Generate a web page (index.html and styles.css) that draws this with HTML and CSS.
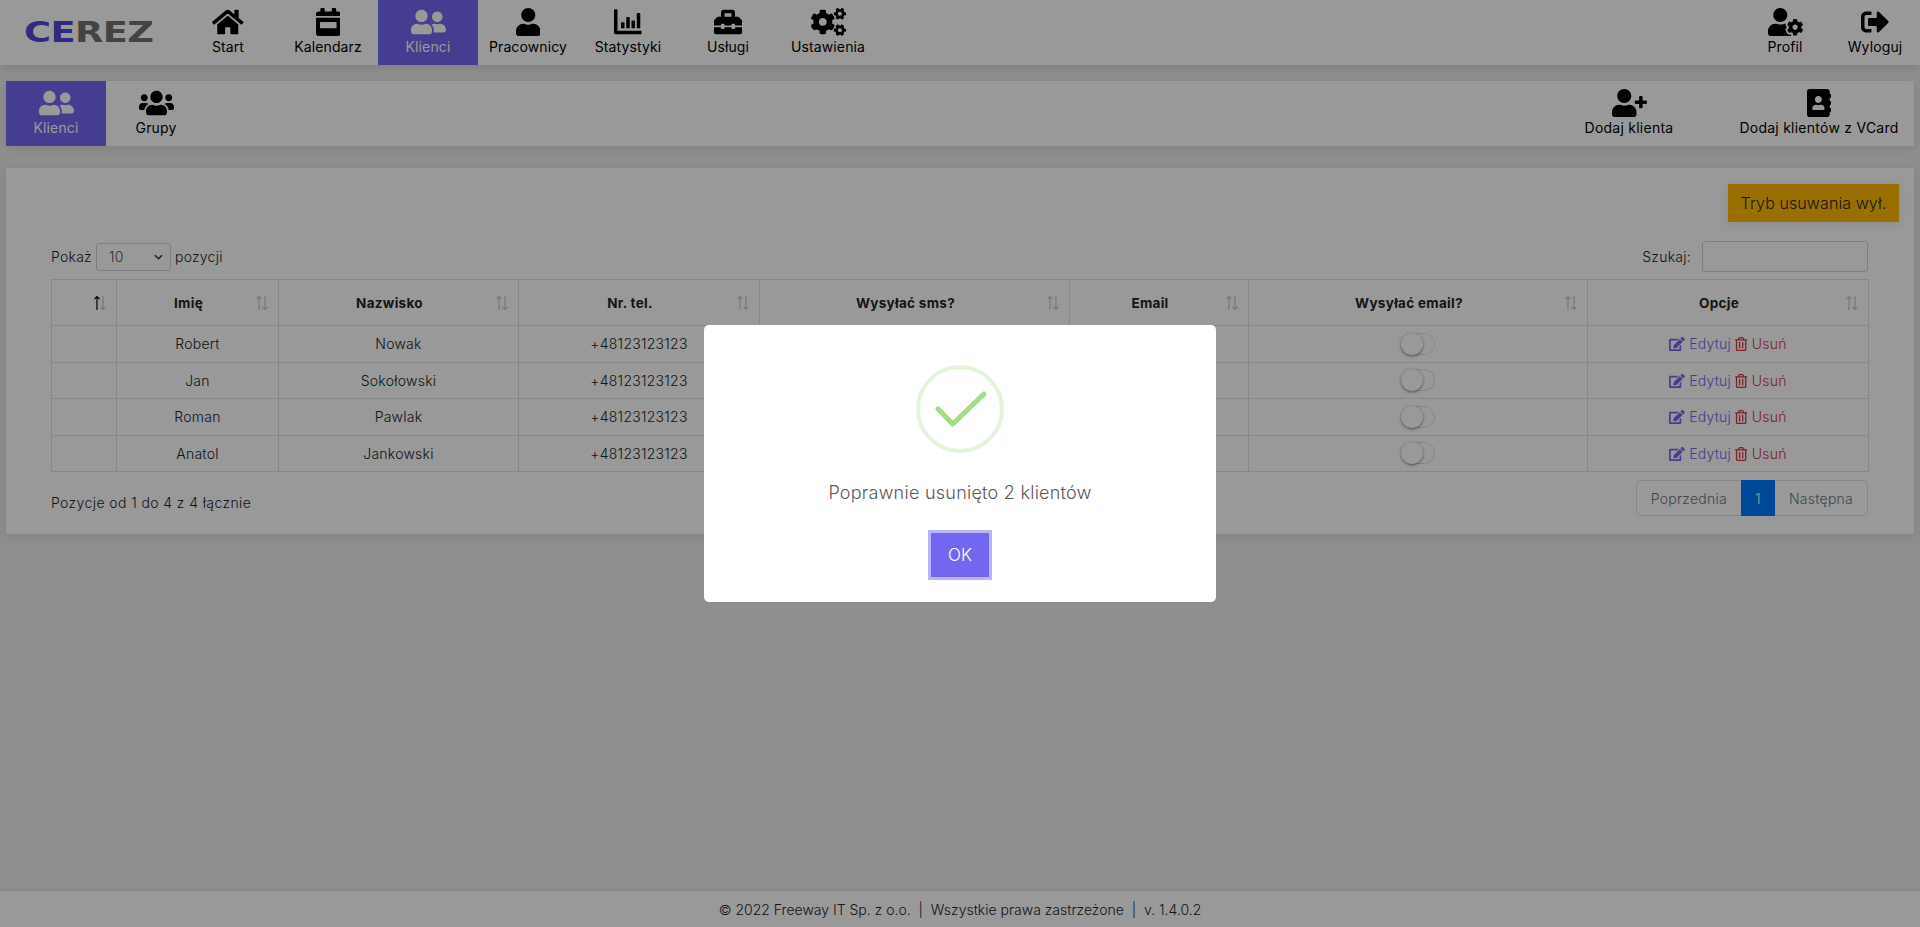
FILE: index.html
```html
<!DOCTYPE html>
<html lang="pl">
<head>
<meta charset="utf-8">
<title>Cerez - Klienci</title>
<link rel="stylesheet" href="styles.css">
</head>
<body>
<svg class="defs" aria-hidden="true">
<defs>
<path id="i-home" d="M280.37 148.26L96 300.11V464a16 16 0 0 0 16 16l112.06-.29a16 16 0 0 0 15.92-16V368a16 16 0 0 1 16-16h64a16 16 0 0 1 16 16v95.64a16 16 0 0 0 16 16.05L464 480a16 16 0 0 0 16-16V300L295.67 148.26a12.19 12.19 0 0 0-15.3 0zM571.6 251.47L488 182.56V44.05a12 12 0 0 0-12-12h-56a12 12 0 0 0-12 12v72.61L318.47 43a48 48 0 0 0-61 0L4.34 251.47a12 12 0 0 0-1.6 16.9l25.5 31A12 12 0 0 0 45.15 301l235.22-193.74a12.19 12.19 0 0 1 15.3 0L530.9 301a12 12 0 0 0 16.9-1.6l25.5-31a12 12 0 0 0-1.7-16.93z"/>
<path id="i-cal" fill-rule="evenodd" d="M96 0h48c9 0 16 7 16 16v48h128V16c0-9 7-16 16-16h48c9 0 16 7 16 16v48h40c27 0 48 21 48 48v32H0v-32c0-27 21-48 48-48h32V16c0-9 7-16 16-16zM0 176h448v288c0 27-21 48-48 48H48c-27 0-48-21-48-48zM84 256c-7 0-12 5-12 12v88c0 7 5 12 12 12h280c7 0 12-5 12-12v-88c0-7-5-12-12-12z"/>
<path id="i-friends" d="M192 256c61.9 0 112-50.1 112-112S253.9 32 192 32 80 82.1 80 144s50.1 112 112 112zm76.8 32h-8.3c-20.8 10-43.9 16-68.5 16s-47.6-6-68.5-16h-8.3C51.6 288 0 339.6 0 403.2V432c0 26.5 21.5 48 48 48h288c26.5 0 48-21.5 48-48v-28.8c0-63.6-51.6-115.2-115.2-115.2zM480 256c53 0 96-43 96-96s-43-96-96-96-96 43-96 96 43 96 96 96zm48 32h-3.8c-13.9 4.8-28.6 8-44.2 8s-30.3-3.2-44.2-8H432c-20.4 0-39.2 5.9-55.7 15.4 24.4 26.3 39.7 61.2 39.7 99.8v38.4c0 2.2-.5 4.3-.6 6.4H592c26.5 0 48-21.5 48-48 0-61.9-50.1-112-112-112z"/>
<path id="i-user" d="M224 256c70.7 0 128-57.3 128-128S294.7 0 224 0 96 57.3 96 128s57.3 128 128 128zm89.6 32h-16.7c-22.2 10.2-46.9 16-72.9 16s-50.6-5.8-72.9-16h-16.7C60.2 288 0 348.2 0 422.4V464c0 26.5 21.5 48 48 48h352c26.5 0 48-21.5 48-48v-41.6c0-74.2-60.2-134.4-134.4-134.4z"/>
<path id="i-chart" d="M0 40c0-9 7-16 16-16h32c9 0 16 7 16 16v376h424c9 0 16 7 16 16v32c0 9-7 16-16 16H32c-18 0-32-14-32-32zM128 272c0-6 5-12 12-12h40c7 0 12 6 12 12v88c0 7-5 12-12 12h-40c-7 0-12-5-12-12zm96-96c0-7 5-12 12-12h40c7 0 12 5 12 12v184c0 7-5 12-12 12h-40c-7 0-12-5-12-12zm96 64c0-7 5-12 12-12h40c7 0 12 5 12 12v120c0 7-5 12-12 12h-40c-7 0-12-5-12-12zm96-136c0-7 5-12 12-12h40c7 0 12 5 12 12v256c0 7-5 12-12 12h-40c-7 0-12-5-12-12z"/>
<path id="i-toolbox" d="M502.63 214.63l-45.25-45.25c-6-6-14.14-9.37-22.63-9.37H384V80c0-26.51-21.49-48-48-48H176c-26.51 0-48 21.49-48 48v80H77.25c-8.49 0-16.63 3.37-22.63 9.37L9.37 214.63c-6 6-9.37 14.14-9.37 22.63V320h128v-16c0-8.84 7.16-16 16-16h32c8.84 0 16 7.16 16 16v16h128v-16c0-8.84 7.16-16 16-16h32c8.84 0 16 7.16 16 16v16h128v-82.75c0-8.48-3.37-16.62-9.37-22.62zM320 160H192V96h128v64zm64 208c0 8.84-7.16 16-16 16h-32c-8.84 0-16-7.16-16-16v-16H192v16c0 8.84-7.16 16-16 16h-32c-8.84 0-16-7.16-16-16v-16H0v96c0 17.67 14.33 32 32 32h448c17.67 0 32-14.33 32-32v-96H384v16z"/>
<path id="i-cogs" d="M512.1 191l-8.2 14.3c-3 5.3-9.4 7.5-15.1 5.4-11.8-4.4-22.6-10.7-32.1-18.6-4.6-3.8-5.8-10.5-2.8-15.7l8.2-14.3c-6.9-8-12.3-17.3-15.9-27.4h-16.5c-6 0-11.2-4.3-12.2-10.3-2-12-2.1-24.6 0-37.1 1-6 6.2-10.4 12.2-10.4h16.5c3.6-10.1 9-19.4 15.9-27.4l-8.2-14.3c-3-5.2-1.9-11.9 2.8-15.7 9.5-7.9 20.4-14.2 32.1-18.6 5.7-2.1 12.1.1 15.1 5.4l8.2 14.3c10.5-1.9 21.2-1.9 31.7 0L552 6.3c3-5.3 9.4-7.5 15.1-5.4 11.8 4.4 22.6 10.7 32.1 18.6 4.6 3.8 5.8 10.5 2.8 15.7l-8.2 14.3c6.9 8 12.3 17.3 15.9 27.4h16.5c6 0 11.2 4.3 12.2 10.3 2 12 2.1 24.6 0 37.1-1 6-6.2 10.4-12.2 10.4h-16.5c-3.6 10.1-9 19.4-15.9 27.4l8.2 14.3c3 5.2 1.9 11.9-2.8 15.7-9.5 7.9-20.4 14.2-32.1 18.6-5.7 2.1-12.1-.1-15.1-5.4l-8.2-14.3c-10.4 1.9-21.2 1.9-31.7 0zm-10.5-58.8c38.5 29.6 82.4-14.3 52.8-52.8-38.5-29.7-82.4 14.3-52.8 52.8zM386.3 286.1l33.7 16.8c10.1 5.8 14.5 18.1 10.5 29.1-8.9 24.2-26.4 46.4-42.6 65.8-7.4 8.9-20.2 11.1-30.3 5.3l-29.1-16.8c-16 13.7-34.6 24.6-54.9 31.7v33.6c0 11.6-8.3 21.6-19.7 23.6-24.6 4.2-50.4 4.4-75.9 0-11.5-2-20-11.9-20-23.6V418c-20.3-7.2-38.9-18-54.9-31.7L74 403c-10 5.8-22.9 3.6-30.3-5.3-16.2-19.4-33.3-41.6-42.2-65.7-4-10.9.4-23.2 10.5-29.1l33.3-16.8c-3.9-20.9-3.9-42.4 0-63.4L12 205.8c-10.1-5.8-14.6-18.1-10.5-29 8.9-24.2 26-46.4 42.2-65.8 7.4-8.9 20.2-11.1 30.3-5.3l29.1 16.8c16-13.7 34.6-24.6 54.9-31.7V57.1c0-11.5 8.2-21.5 19.6-23.5 24.6-4.2 50.5-4.4 76-.1 11.5 2 20 11.9 20 23.6v33.6c20.3 7.2 38.9 18 54.9 31.7l29.1-16.8c10-5.8 22.9-3.6 30.3 5.3 16.2 19.4 33.2 41.6 42.1 65.8 4 10.9.1 23.2-10 29.1l-33.7 16.8c3.9 21 3.9 42.5 0 63.5zm-117.6 21.1c59.2-77-28.7-164.9-105.7-105.7-59.2 77 28.7 164.9 105.7 105.7zm243.4 182.7l-8.2 14.3c-3 5.3-9.4 7.5-15.1 5.4-11.8-4.4-22.6-10.7-32.1-18.6-4.6-3.8-5.8-10.5-2.8-15.7l8.2-14.3c-6.9-8-12.3-17.3-15.9-27.4h-16.5c-6 0-11.2-4.3-12.2-10.3-2-12-2.1-24.6 0-37.1 1-6 6.2-10.4 12.2-10.4h16.5c3.6-10.1 9-19.4 15.9-27.4l-8.2-14.3c-3-5.2-1.9-11.9 2.8-15.7 9.5-7.9 20.4-14.2 32.1-18.6 5.7-2.1 12.1.1 15.1 5.4l8.2 14.3c10.5-1.9 21.2-1.9 31.7 0l8.2-14.3c3-5.3 9.4-7.5 15.1-5.4 11.8 4.4 22.6 10.7 32.1 18.6 4.6 3.8 5.8 10.5 2.8 15.7l-8.2 14.3c6.9 8 12.3 17.3 15.9 27.4h16.5c6 0 11.2 4.3 12.2 10.3 2 12 2.1 24.6 0 37.1-1 6-6.2 10.4-12.2 10.4h-16.5c-3.6 10.1-9 19.4-15.9 27.4l8.2 14.3c3 5.2 1.9 11.9-2.8 15.7-9.5 7.9-20.4 14.2-32.1 18.6-5.7 2.1-12.1-.1-15.1-5.4l-8.2-14.3c-10.4 1.9-21.2 1.9-31.7 0zM501.6 431c38.5 29.6 82.4-14.3 52.8-52.8-38.5-29.6-82.4 14.3-52.8 52.8z"/>
<path id="i-usercog" d="M610.5 373.3c2.6-14.1 2.6-28.5 0-42.6l25.8-14.9c3-1.7 4.3-5.2 3.3-8.5-6.7-21.6-18.2-41.2-33.2-57.4-2.3-2.5-6-3.1-9-1.4l-25.8 14.9c-10.9-9.3-23.4-16.5-36.9-21.3v-29.8c0-3.4-2.4-6.4-5.7-7.1-22.3-5-45-4.8-66.2 0-3.3.7-5.7 3.7-5.7 7.1v29.8c-13.5 4.8-26 12-36.9 21.3l-25.8-14.9c-2.9-1.7-6.7-1.1-9 1.4-15 16.2-26.5 35.8-33.2 57.4-1 3.3.4 6.8 3.3 8.5l25.8 14.9c-2.6 14.1-2.6 28.5 0 42.6l-25.8 14.9c-3 1.7-4.3 5.2-3.3 8.5 6.7 21.6 18.2 41.1 33.2 57.4 2.3 2.5 6 3.1 9 1.4l25.8-14.9c10.9 9.3 23.4 16.5 36.9 21.3v29.8c0 3.4 2.4 6.4 5.7 7.1 22.3 5 45 4.8 66.2 0 3.3-.7 5.7-3.7 5.7-7.1v-29.8c13.5-4.8 26-12 36.9-21.3l25.8 14.9c2.9 1.7 6.7 1.1 9-1.4 15-16.2 26.5-35.8 33.2-57.4 1-3.3-.4-6.8-3.3-8.5l-25.8-14.9zM496 400.5c-26.8 0-48.5-21.8-48.5-48.5s21.8-48.5 48.5-48.5 48.5 21.8 48.5 48.5-21.7 48.5-48.5 48.5zM224 256c70.7 0 128-57.3 128-128S294.7 0 224 0 96 57.3 96 128s57.3 128 128 128zm201.2 226.5c-2.3-1.2-4.6-2.6-6.8-3.9l-7.9 4.6c-6 3.4-12.8 5.3-19.6 5.3-10.9 0-21.4-4.6-28.9-12.6-18.3-19.8-32.3-43.9-40.2-69.6-5.5-17.7 1.9-36.4 17.9-45.7l7.9-4.6c-.1-2.6-.1-5.2 0-7.8l-7.9-4.6c-16-9.2-23.4-28-17.9-45.7.9-2.9 2.2-5.8 3.2-8.7-3.8-.3-7.5-1.2-11.4-1.2h-16.7c-22.2 10.2-46.9 16-72.9 16s-50.6-5.8-72.9-16h-16.7C60.2 288 0 348.2 0 422.4V464c0 26.5 21.5 48 48 48h352c10.1 0 19.5-3.2 27.2-8.5-1.2-3.8-2-7.7-2-11.8v-9.2z"/>
<path id="i-signout" d="M497 273L329 441c-15 15-41 4.5-41-17v-96H152c-13.3 0-24-10.7-24-24v-96c0-13.3 10.7-24 24-24h136V88c0-21.4 25.9-32 41-17l168 168c9.3 9.4 9.3 24.6 0 34zM192 436v-40c0-6.6-5.4-12-12-12H96c-17.7 0-32-14.3-32-32V160c0-17.7 14.3-32 32-32h84c6.6 0 12-5.4 12-12V76c0-6.6-5.4-12-12-12H96c-53 0-96 43-96 96v192c0 53 43 96 96 96h84c6.6 0 12-5.4 12-12z"/>
<path id="i-users" d="M96 224c35.3 0 64-28.7 64-64s-28.7-64-64-64-64 28.7-64 64 28.7 64 64 64zm448 0c35.3 0 64-28.7 64-64s-28.7-64-64-64-64 28.7-64 64 28.7 64 64 64zm32 32h-64c-17.6 0-33.5 7.1-45.1 18.6 40.3 22.1 68.9 62 75.1 109.4h66c17.7 0 32-14.3 32-32v-32c0-35.3-28.7-64-64-64zm-256 0c61.9 0 112-50.1 112-112S381.9 32 320 32 208 82.1 208 144s50.1 112 112 112zm76.8 32h-8.3c-20.8 10-43.9 16-68.5 16s-47.6-6-68.5-16h-8.3C179.6 288 128 339.6 128 403.2V432c0 26.5 21.5 48 48 48h288c26.5 0 48-21.5 48-48v-28.8c0-63.6-51.6-115.2-115.2-115.2zm-223.7-13.4C161.5 263.1 145.6 256 128 256H64c-35.3 0-64 28.7-64 64v32c0 17.7 14.3 32 32 32h65.9c6.3-47.4 34.9-87.3 75.2-109.4z"/>
<path id="i-userplus" d="M624 208h-64v-64c0-8.8-7.2-16-16-16h-32c-8.8 0-16 7.2-16 16v64h-64c-8.8 0-16 7.2-16 16v32c0 8.8 7.2 16 16 16h64v64c0 8.8 7.2 16 16 16h32c8.8 0 16-7.2 16-16v-64h64c8.8 0 16-7.2 16-16v-32c0-8.8-7.2-16-16-16zm-400 48c70.7 0 128-57.3 128-128S294.7 0 224 0 96 57.3 96 128s57.3 128 128 128zm89.6 32h-16.7c-22.2 10.2-46.9 16-72.9 16s-50.6-5.8-72.9-16h-16.7C60.2 288 0 348.2 0 422.4V464c0 26.5 21.5 48 48 48h352c26.5 0 48-21.5 48-48v-41.6c0-74.2-60.2-134.4-134.4-134.4z"/>
<path id="i-book" d="M436 160c6.6 0 12-5.4 12-12v-40c0-6.6-5.4-12-12-12h-20V48c0-26.5-21.5-48-48-48H48C21.5 0 0 21.5 0 48v416c0 26.5 21.5 48 48 48h320c26.5 0 48-21.5 48-48v-48h20c6.6 0 12-5.4 12-12v-40c0-6.6-5.4-12-12-12h-20v-64h20c6.6 0 12-5.4 12-12v-40c0-6.6-5.4-12-12-12h-20v-64h20zm-228-32c35.3 0 64 28.7 64 64s-28.7 64-64 64-64-28.7-64-64 28.7-64 64-64zm112 236.8c0 10.6-10 19.2-22.4 19.2H118.4C106 384 96 375.4 96 364.8v-19.2c0-31.8 30.1-57.6 67.2-57.6h5c12.3 5.1 25.7 8 39.8 8s27.6-2.9 39.8-8h5c37.1 0 67.2 25.8 67.2 57.6v19.2z"/>
<path id="i-edit" d="M402.6 83.2l90.2 90.2c3.8 3.8 3.8 10 0 13.8L274.4 405.6l-92.8 10.3c-12.4 1.4-22.9-9.1-21.5-21.5l10.3-92.8L388.8 83.2c3.8-3.8 10-3.8 13.8 0zm162-22.9l-48.8-48.8c-15.2-15.2-39.9-15.2-55.2 0l-35.4 35.4c-3.8 3.8-3.8 10 0 13.8l90.2 90.2c3.8 3.8 10 3.8 13.8 0l35.4-35.4c15.2-15.3 15.2-40 0-55.2zM384 346.2V448H64V128h229.8c3.2 0 6.2-1.3 8.5-3.5l40-40c7.6-7.6 2.2-20.5-8.5-20.5H48C21.5 64 0 85.5 0 112v352c0 26.5 21.5 48 48 48h352c26.5 0 48-21.5 48-48V306.2c0-10.7-12.9-16-20.5-8.5l-40 40c-2.2 2.3-3.5 5.3-3.5 8.5z"/>
<path id="i-trash" d="M268 416h24a12 12 0 0 0 12-12V188a12 12 0 0 0-12-12h-24a12 12 0 0 0-12 12v216a12 12 0 0 0 12 12zM432 80h-82.41l-34-56.7A48 48 0 0 0 274.41 0H173.59a48 48 0 0 0-41.16 23.3L98.41 80H16A16 16 0 0 0 0 96v16a16 16 0 0 0 16 16h16v336a48 48 0 0 0 48 48h288a48 48 0 0 0 48-48V128h16a16 16 0 0 0 16-16V96a16 16 0 0 0-16-16zM171.84 50.91A6 6 0 0 1 177 48h94a6 6 0 0 1 5.15 2.91L293.61 80H154.39zM368 464H80V128h288zm-212-48h24a12 12 0 0 0 12-12V188a12 12 0 0 0-12-12h-24a12 12 0 0 0-12 12v216a12 12 0 0 0 12 12z"/>
<path id="i-up" d="M5 15V1.500M2.400 4.200 5 1.500l2.600 2.700"/>
<path id="i-down" d="M11 1v13.500M8.400 11.800 11 14.500l2.600-2.700"/>
</defs>
</svg>

<header class="topbar">
  <a class="logo"><span class="logo-text"><span class="logo-a">CE</span><span class="logo-b">REZ</span></span></a>
  <nav class="nav">
    <a class="tab"><svg class="ico" viewBox="0 0 576 512"><use href="#i-home"/></svg><span>Start</span></a>
    <a class="tab"><svg class="ico" viewBox="0 0 448 512"><use href="#i-cal"/></svg><span>Kalendarz</span></a>
    <a class="tab active"><svg class="ico" viewBox="0 0 640 512"><use href="#i-friends"/></svg><span>Klienci</span></a>
    <a class="tab"><svg class="ico" viewBox="0 0 448 512"><use href="#i-user"/></svg><span>Pracownicy</span></a>
    <a class="tab"><svg class="ico" viewBox="0 0 512 512"><use href="#i-chart"/></svg><span>Statystyki</span></a>
    <a class="tab"><svg class="ico" viewBox="0 0 512 512"><use href="#i-toolbox"/></svg><span>Usługi</span></a>
    <a class="tab"><svg class="ico" viewBox="0 0 640 512"><use href="#i-cogs"/></svg><span>Ustawienia</span></a>
  </nav>
  <nav class="nav nav-right">
    <a class="tab tab-s"><svg class="ico" viewBox="0 0 640 512"><use href="#i-usercog"/></svg><span>Profil</span></a>
    <a class="tab tab-s"><svg class="ico" viewBox="0 0 512 512"><use href="#i-signout"/></svg><span>Wyloguj</span></a>
  </nav>
</header>

<section class="subbar">
  <nav class="nav">
    <a class="tab active"><svg class="ico" viewBox="0 0 640 512"><use href="#i-friends"/></svg><span>Klienci</span></a>
    <a class="tab"><svg class="ico" viewBox="0 0 640 512"><use href="#i-users"/></svg><span>Grupy</span></a>
  </nav>
  <nav class="nav nav-right">
    <a class="tab tab-l"><svg class="ico" viewBox="0 0 640 512"><use href="#i-userplus"/></svg><span>Dodaj klienta</span></a>
    <a class="tab tab-l"><svg class="ico" viewBox="0 0 448 512"><use href="#i-book"/></svg><span>Dodaj klientów z VCard</span></a>
  </nav>
</section>

<main class="card">
  <div class="card-actions"><button class="btn-warning" type="button">Tryb usuwania wył.</button></div>
  <div class="dt">
    <div class="dt-controls">
      <label class="dt-len">Pokaż <span class="select">10<svg class="chev" viewBox="0 0 10 6"><path d="M1 1l4 4 4-4"/></svg></span> pozycji</label>
      <label class="dt-search">Szukaj: <span class="input"></span></label>
    </div>
    <table class="table">
      <colgroup>
        <col class="c1"><col class="c2"><col class="c3"><col class="c4"><col class="c5"><col class="c6"><col class="c7"><col class="c8">
      </colgroup>
      <thead>
        <tr>
          <th class="sorted"><svg class="sort" viewBox="0 0 16 16"><use class="up" href="#i-up"/><use class="down" href="#i-down"/></svg></th>
          <th>Imię<svg class="sort" viewBox="0 0 16 16"><use class="up" href="#i-up"/><use class="down" href="#i-down"/></svg></th>
          <th>Nazwisko<svg class="sort" viewBox="0 0 16 16"><use class="up" href="#i-up"/><use class="down" href="#i-down"/></svg></th>
          <th>Nr. tel.<svg class="sort" viewBox="0 0 16 16"><use class="up" href="#i-up"/><use class="down" href="#i-down"/></svg></th>
          <th>Wysyłać sms?<svg class="sort" viewBox="0 0 16 16"><use class="up" href="#i-up"/><use class="down" href="#i-down"/></svg></th>
          <th>Email<svg class="sort" viewBox="0 0 16 16"><use class="up" href="#i-up"/><use class="down" href="#i-down"/></svg></th>
          <th>Wysyłać email?<svg class="sort" viewBox="0 0 16 16"><use class="up" href="#i-up"/><use class="down" href="#i-down"/></svg></th>
          <th>Opcje<svg class="sort" viewBox="0 0 16 16"><use class="up" href="#i-up"/><use class="down" href="#i-down"/></svg></th>
        </tr>
      </thead>
      <tbody>
        <tr><td></td><td>Robert</td><td>Nowak</td><td>+48123123123</td><td><span class="toggle"></span></td><td></td><td><span class="toggle"></span></td><td><a class="act edit"><svg class="aico" viewBox="0 0 576 512"><use href="#i-edit"/></svg> Edytuj</a> <a class="act del"><svg class="aico" viewBox="0 0 448 512"><use href="#i-trash"/></svg> Usuń</a></td></tr>
        <tr><td></td><td>Jan</td><td>Sokołowski</td><td>+48123123123</td><td><span class="toggle"></span></td><td></td><td><span class="toggle"></span></td><td><a class="act edit"><svg class="aico" viewBox="0 0 576 512"><use href="#i-edit"/></svg> Edytuj</a> <a class="act del"><svg class="aico" viewBox="0 0 448 512"><use href="#i-trash"/></svg> Usuń</a></td></tr>
        <tr><td></td><td>Roman</td><td>Pawlak</td><td>+48123123123</td><td><span class="toggle"></span></td><td></td><td><span class="toggle"></span></td><td><a class="act edit"><svg class="aico" viewBox="0 0 576 512"><use href="#i-edit"/></svg> Edytuj</a> <a class="act del"><svg class="aico" viewBox="0 0 448 512"><use href="#i-trash"/></svg> Usuń</a></td></tr>
        <tr><td></td><td>Anatol</td><td>Jankowski</td><td>+48123123123</td><td><span class="toggle"></span></td><td></td><td><span class="toggle"></span></td><td><a class="act edit"><svg class="aico" viewBox="0 0 576 512"><use href="#i-edit"/></svg> Edytuj</a> <a class="act del"><svg class="aico" viewBox="0 0 448 512"><use href="#i-trash"/></svg> Usuń</a></td></tr>
      </tbody>
    </table>
    <div class="dt-foot">
      <span class="dt-info">Pozycje od 1 do 4 z 4 łącznie</span>
      <div class="pager"><a class="pg">Poprzednia</a><a class="pg current">1</a><a class="pg">Następna</a></div>
    </div>
  </div>
</main>

<footer class="footer">© 2022 Freeway IT Sp. z o.o. &nbsp;|&nbsp; Wszystkie prawa zastrzeżone &nbsp;|&nbsp; v. 1.4.0.2</footer>

<div class="overlay">
  <div class="modal" role="dialog">
    <svg class="check" viewBox="0 0 88 88">
      <circle class="check-ring" cx="44" cy="44" r="42"/>
      <path class="check-mark" d="M22 44 36.700 59 68 29"/>
    </svg>
    <p class="modal-text">Poprawnie usunięto 2 klientów</p>
    <button class="btn-ok" type="button">OK</button>
  </div>
</div>
</body>
</html>
```

FILE: styles.css
```css
* { box-sizing: border-box; }
html, body { height: 100%; }
body {
  margin: 0;
  min-height: 927px;
  display: flex;
  flex-direction: column;
  background: #ededed;
  color: #212529;
  font-family: "Inter", "Liberation Sans", sans-serif;
  font-size: 14px;
  font-weight: 300;
  letter-spacing: .25px;
  overflow: hidden;
}
.defs { position: absolute; width: 0; height: 0; }

.topbar {
  height: 65px;
  flex: none;
  display: flex;
  background: #fff;
  box-shadow: 0 2px 10px rgba(0, 0, 0, .12);
}
.logo {
  width: 178px;
  flex: none;
  display: flex;
  align-items: center;
  padding-left: 24px;
  font-family: "DejaVu Sans", sans-serif;
  font-weight: 700;
  font-size: 29px;
  letter-spacing: -.5px;
  line-height: 1;
}
.logo-text { display: block; transform: scaleX(1.27); transform-origin: left center; }
.logo-a { color: #5347d8; }
.logo-b { color: #717171; }

.nav { display: flex; }
.nav-right { margin-left: auto; }
.tab {
  width: 100px;
  height: 65px;
  display: flex;
  flex-direction: column;
  align-items: center;
  padding-top: 8px;
  color: #000;
  font-weight: 400;
  letter-spacing: .12px;
  line-height: 21px;
  white-space: nowrap;
}
.tab-s { width: 90px; }
.tab-l { width: 190px; letter-spacing: .25px; }
.tab.active { background: #7367f0; color: #fff; }
.ico { height: 28px; display: block; fill: currentColor; flex: none; }

.subbar {
  height: 65px;
  flex: none;
  margin: 16px 6px 0;
  display: flex;
  background: #fff;
  box-shadow: 0 2px 10px rgba(0, 0, 0, .1);
}

.card {
  flex: none;
  margin: 22px 6px 0;
  padding: 16px 15px 18px 0;
  background: #fff;
  box-shadow: 0 2px 10px rgba(0, 0, 0, .1);
}
.card-actions { display: flex; justify-content: flex-end; }
.btn-warning {
  height: 38px;
  width: 171px;
  padding: 0;
  border: 0;
  background: #ffbb00;
  color: #212529;
  font: inherit;
  font-size: 16px;
  letter-spacing: .1px;
  box-shadow: 0 2px 10px rgba(0, 0, 0, .1);
}
.dt { margin: 19px 31px 0 45px; }
.dt-controls {
  height: 31px;
  display: flex;
  justify-content: space-between;
  align-items: center;
  margin-bottom: 7px;
}
.dt-len, .dt-search { display: flex; align-items: center; gap: 4px; white-space: nowrap; }
.dt-search { gap: 11px; }
.select {
  width: 75px;
  height: 28px;
  display: flex;
  align-items: center;
  justify-content: space-between;
  padding: 0 7px 0 12px;
  border: 1px solid #ced4da;
  border-radius: 3px;
  color: #495057;
}
.chev { width: 9px; height: 6px; fill: none; stroke: #333; stroke-width: 1.6; }
.input {
  width: 166px;
  height: 31px;
  display: block;
  border: 1px solid #ced4da;
  border-radius: 3px;
  background: #fff;
}

.table {
  width: 1817px;
  table-layout: fixed;
  border-collapse: collapse;
  text-align: center;
}
.c1 { width: 65px; }
.c2 { width: 162px; }
.c3 { width: 240px; }
.c4 { width: 241px; }
.c5 { width: 310px; }
.c6 { width: 179px; }
.c7 { width: 339px; }
.c8 { width: 281px; }
.table th, .table td { border: 1px solid #dee2e6; }
.table th {
  position: relative;
  height: 46px;
  padding: 0 30px 0 12px;
  font-weight: 700;
  font-size: 13.500px;
  letter-spacing: .3px;
}
.table td { height: 36.500px; padding: 0 12px; }
.sort {
  position: absolute;
  right: 8px;
  top: 15px;
  width: 16px;
  height: 16px;
  fill: none;
  stroke: #000;
  stroke-width: 1.2;
}
.sort .up, .sort .down { opacity: .22; }
.sorted .sort .up { opacity: 1; }
.toggle {
  position: relative;
  display: block;
  width: 34px;
  height: 22px;
  margin: 0 auto;
  border: 1px solid #dfdfdf;
  border-radius: 11px;
  background: #fff;
}
.toggle::before {
  content: "";
  position: absolute;
  left: -1px;
  top: -1px;
  width: 22px;
  height: 22px;
  border-radius: 50%;
  background: #fff;
  box-shadow: 0 1px 3px rgba(0, 0, 0, .5);
}
.act { white-space: nowrap; }
.edit { color: #7367f0; }
.del { color: #dc3545; }
.aico { height: 14px; vertical-align: -2px; fill: currentColor; }

.dt-foot {
  display: flex;
  justify-content: space-between;
  align-items: flex-start;
  margin-top: 8px;
}
.dt-info { padding-top: 12px; line-height: 21px; letter-spacing: .4px; }
.pager {
  display: flex;
  height: 36px;
  border: 1px solid #dee2e6;
  border-radius: 4px;
  color: #6c757d;
}
.pg { display: flex; align-items: center; padding: 0 14px; }
.pg.current { width: 34px; justify-content: center; padding: 0; margin: -1px 0; background: #007bff; color: #fff; }

.footer {
  margin-top: auto;
  height: 36px;
  flex: none;
  display: flex;
  align-items: center;
  justify-content: center;
  background: #fff;
  color: #212529;
  font-size: 14px;
  letter-spacing: 0;
  box-shadow: 0 -1px 4px rgba(0, 0, 0, .08);
}

.overlay {
  position: fixed;
  inset: 0;
  display: flex;
  align-items: center;
  justify-content: center;
  background: rgba(0, 0, 0, .4);
}
.modal {
  width: 512px;
  height: 277px;
  padding-top: 40px;
  display: flex;
  flex-direction: column;
  align-items: center;
  background: #fff;
  border-radius: 5px;
}
.check { width: 88px; height: 88px; flex: none; display: block; }
.check-ring { fill: none; stroke: #a5dc86; stroke-opacity: .3; stroke-width: 4; }
.check-mark { fill: none; stroke: #a5dc86; stroke-width: 5; stroke-linecap: round; stroke-linejoin: round; }
.modal-text {
  margin: 26px 0 0;
  color: #595959;
  font-size: 18px;
  letter-spacing: .25px;
  line-height: 27px;
}
.btn-ok {
  width: 58px;
  height: 44px;
  margin-top: 27px;
  padding: 0;
  border: 0;
  background: #7367f0;
  color: #fff;
  font: inherit;
  font-size: 17px;
  box-shadow: 0 0 0 3px rgba(115, 103, 240, .5);
}
```
